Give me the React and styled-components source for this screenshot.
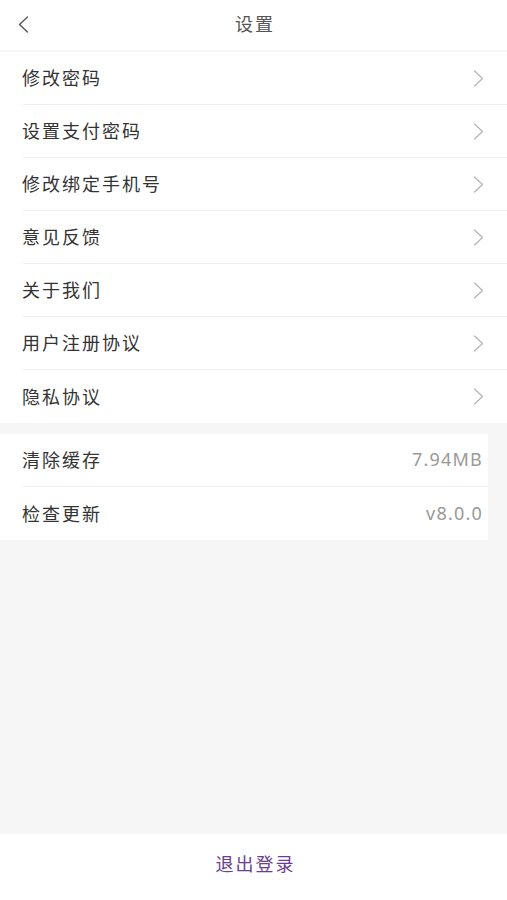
import React from "react";
import styled, { createGlobalStyle } from "styled-components";

const GlobalStyle = createGlobalStyle`
  html, body {
    margin: 0;
    padding: 0;
    background: #f6f6f6;
    font-family: "Noto Sans CJK SC", "Noto Sans", sans-serif;
  }
`;

const Chevron = ({ left, color = "#b8b8b8", w = 11, h = 17 }) => (
  <svg width={w} height={h} viewBox="0 0 11 17" fill="none">
    <path
      d={left ? "M9.5 1L1.5 8.5l8 7.5" : "M1.5 1l8 7.5-8 7.5"}
      stroke={color}
      strokeWidth="1.4"
      strokeLinecap="round"
      strokeLinejoin="round"
    />
  </svg>
);

const links = [
  "修改密码",
  "设置支付密码",
  "修改绑定手机号",
  "意见反馈",
  "关于我们",
  "用户注册协议",
  "隐私协议",
];

const info = [
  { label: "清除缓存", value: "7.94MB" },
  { label: "检查更新", value: "v8.0.0" },
];

const App = () => {
  return (
    <Page>
      <GlobalStyle />
      <Header>
        <Back>
          <Chevron left color="#555" />
        </Back>
        <Title>设置</Title>
      </Header>
      <Section>
        {links.map((label, i) => (
          <Row key={label} last={i === links.length - 1}>
            <Label>{label}</Label>
            <Chevron />
          </Row>
        ))}
      </Section>
      <Section narrow>
        {info.map((item, i) => (
          <Row key={item.label} last={i === info.length - 1}>
            <Label>{item.label}</Label>
            <Value>{item.value}</Value>
          </Row>
        ))}
      </Section>
      <Spacer />
      <Footer>
        <Logout>退出登录</Logout>
      </Footer>
    </Page>
  );
};

const Page = styled.div`
  display: flex;
  flex-direction: column;
  min-height: 100vh;
  background: #f6f6f6;
`;

const Header = styled.div`
  position: relative;
  height: 50px;
  display: flex;
  align-items: center;
  justify-content: center;
  background: #fff;
  margin-bottom: 2px;
`;

const Back = styled.div`
  position: absolute;
  left: 18px;
  top: 16px;
  display: flex;
`;

const Title = styled.div`
  font-size: 18px;
  letter-spacing: 2px;
  color: #555;
  margin-top: -4px;
  margin-left: 3px;
`;

const Section = styled.div`
  background: #fff;
  width: ${(p) => (p.narrow ? "488px" : "100%")};
  margin-bottom: 11px;
`;

const Row = styled.div`
  height: 53px;
  box-sizing: border-box;
  margin-left: 23px;
  padding-right: 23px;
  display: flex;
  align-items: center;
  justify-content: space-between;
  border-bottom: ${(p) => (p.last ? "none" : "1px solid #efefef")};
`;

const Label = styled.span`
  font-size: 18px;
  letter-spacing: 2px;
  color: #333;
  margin-left: -1px;
  margin-top: -2px;
`;

const Value = styled.span`
  font-family: "Noto Sans", sans-serif;
  font-size: 18px;
  letter-spacing: 1.2px;
  color: #999;
  margin-right: -18px;
  margin-top: -2px;
`;

const Spacer = styled.div`
  flex: 1;
`;

const Footer = styled.div`
  height: 66px;
  background: #fff;
  display: flex;
  align-items: center;
  justify-content: center;
`;

const Logout = styled.span`
  font-size: 18px;
  letter-spacing: 2px;
  color: #6b3e91;
  margin-left: 4px;
  margin-top: -9px;
`;

export default App;
